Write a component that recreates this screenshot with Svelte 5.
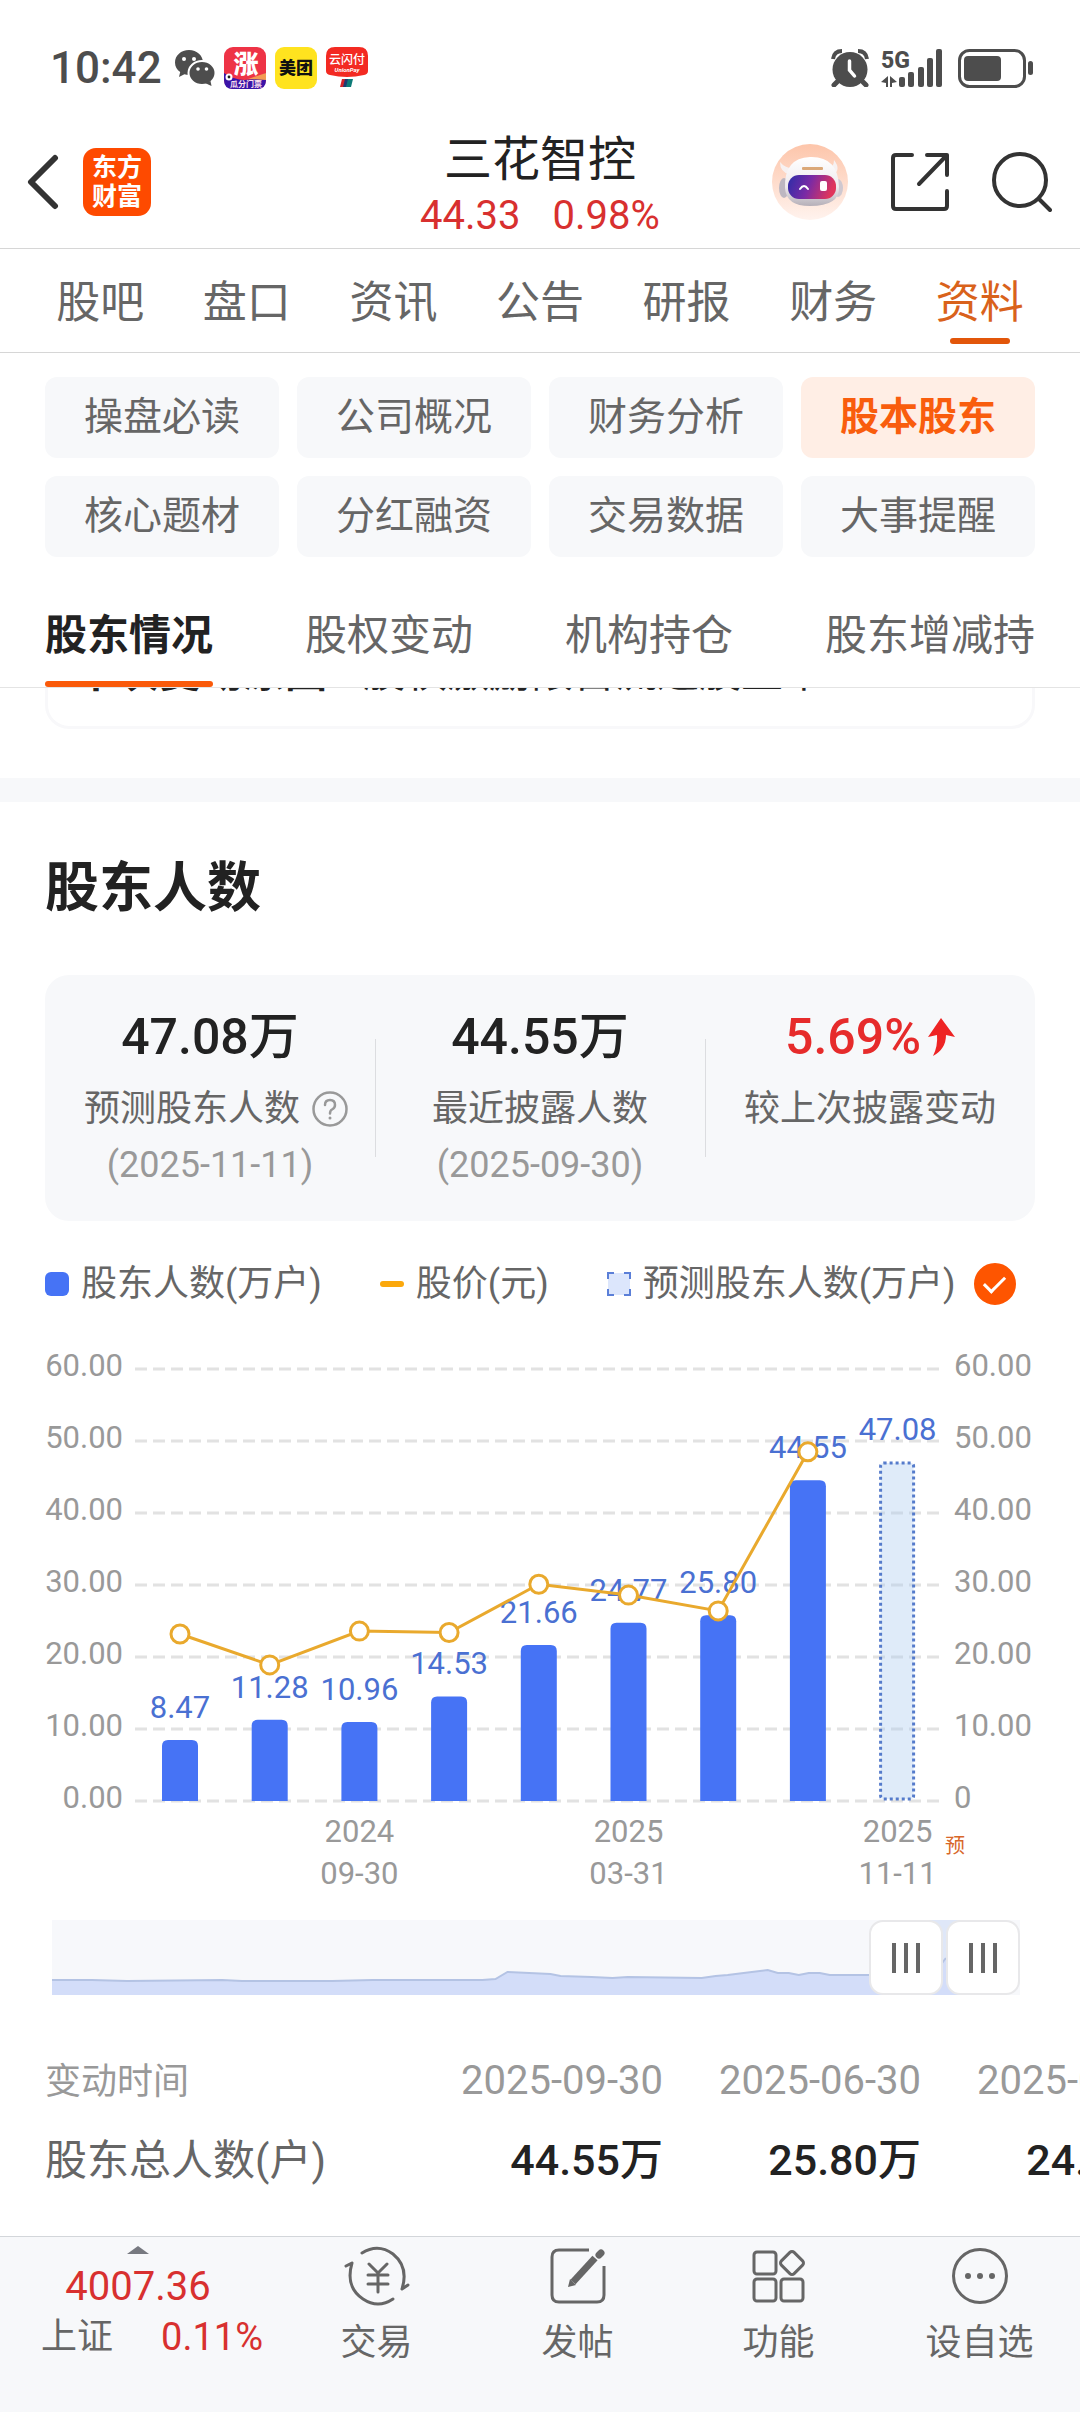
<script lang="ts">
  const tabs = ["股吧", "盘口", "资讯", "公告", "研报", "财务", "资料"];

  const topics = [
    "操盘必读",
    "公司概况",
    "财务分析",
    "股本股东",
    "核心题材",
    "分红融资",
    "交易数据",
    "大事提醒",
  ];

  const sections = ["股东情况", "股权变动", "机构持仓", "股东增减持"];

  type Quarter = {
    holders: number;
    price?: number;
    date?: [string, string];
    forecast?: boolean;
  };

  const quarters: Quarter[] = [
    { holders: 8.47, price: 23.2 },
    { holders: 11.28, price: 18.9 },
    { holders: 10.96, price: 23.6, date: ["2024", "09-30"] },
    { holders: 14.53, price: 23.4 },
    { holders: 21.66, price: 30.1 },
    { holders: 24.77, price: 28.6, date: ["2025", "03-31"] },
    { holders: 25.8, price: 26.4 },
    { holders: 44.55, price: 48.5 },
    { holders: 47.08, date: ["2025", "11-11"], forecast: true },
  ];

  const history = [
    { date: "2025-09-30", total: "44.55万" },
    { date: "2025-06-30", total: "25.80万" },
    { date: "2025-03-31", total: "24.77万" },
  ];

  const ticks = [60, 50, 40, 30, 20, 10, 0];

  // chart geometry, in viewBox units
  const base = 472;
  const barWidth = 36;
  const yOf = (value: number) => base - value * 7.2;
  const xOf = (index: number) => 180 + index * 89.7;

  const barPath = (index: number, value: number) => {
    const x = xOf(index) - barWidth / 2;
    const y = yOf(value);
    return `M${x} ${base}V${y + 6}q0-6 6-6h${barWidth - 12}q6 0 6 6V${base}z`;
  };

  const priceLine = quarters
    .map((q, i) => (q.price ? `${xOf(i)},${yOf(q.price)}` : ""))
    .join(" ")
    .trim();

  let activeTab = $state("资料");
  let activeTopic = $state("股本股东");
  let activeSection = $state("股东情况");
  let showForecast = $state(true);
  let from = $state(91.4);
  let to = $state(100);
</script>

<div class="page">
  <div class="status">
    <span class="clock">10:42</span>
    <svg class="wechat" width="41" height="38" viewBox="0 0 41 38" aria-hidden="true">
      <path fill="#4d4d4d" d="M15 1C7 1 1 6.500 1 13.500c0 4 2 7.500 5.200 9.600L5 28l5.400-2.800c1.500.4 3 .6 4.600.6 8 0 14-5.500 14-12.300S23 1 15 1z" />
      <ellipse cx="28" cy="24" rx="13.500" ry="12" fill="#4d4d4d" stroke="#fff" stroke-width="2" />
      <path fill="#4d4d4d" d="M31 34l6.500 3-1-5z" />
      <g fill="#fff">
        <circle cx="10" cy="10" r="2" /><circle cx="20" cy="10" r="2" />
        <circle cx="24" cy="20" r="1.800" /><circle cx="32.500" cy="20" r="1.800" />
      </g>
    </svg>
    <svg class="app" width="42" height="42" viewBox="0 0 42 42" aria-hidden="true">
      <rect width="42" height="42" rx="9" fill="#ee3346" />
      <path d="M0 26q20 14 42 0v7q0 9-9 9H9q-9 0-9-9z" fill="#3a14a8" />
      <path d="M24 32l18-6v7z" fill="#f39b54" />
      <text x="22" y="26" font-size="25" font-weight="900" fill="#fff" text-anchor="middle">涨</text>
      <circle cx="5" cy="30" r="3.500" fill="#fff" /><circle cx="5" cy="30" r="1.400" fill="#222" />
      <text x="22" y="40" font-size="8" font-weight="700" fill="#ffe3ee" text-anchor="middle">瓜分门票</text>
    </svg>
    <svg class="app" width="42" height="42" viewBox="0 0 42 42" aria-hidden="true">
      <rect width="42" height="42" rx="9" fill="#ffe31f" />
      <text x="21" y="27" font-size="17" font-weight="900" fill="#111" text-anchor="middle">美团</text>
    </svg>
    <svg class="app" width="42" height="42" viewBox="0 0 42 42" aria-hidden="true">
      <path d="M9 0h24q9 0 9 9v15q0 3-4 4-17 4-34 0-4-1-4-4V9q0-9 9-9z" fill="#f32a22" />
      <text x="21" y="17" font-size="12" font-weight="500" fill="#fff" text-anchor="middle">云闪付</text>
      <text x="21" y="25" font-size="6" font-style="italic" font-weight="700" fill="#fff" text-anchor="middle">UnionPay</text>
      <path d="M16 32h5l-2 8h-5z" fill="#d2232a" /><path d="M19 32h5l-2 8h-5z" fill="#1d3b72" /><path d="M22 32h5l-2 8h-5z" fill="#0d7b78" />
    </svg>
    <span class="fill"></span>
    <svg width="38" height="38" viewBox="0 0 38 38" fill="none" stroke="#4d4d4d" aria-hidden="true">
      <circle cx="19" cy="20.500" r="17.500" fill="#4d4d4d" stroke="none" />
      <path d="M2 10Q3 2 11 2M27 2q8 0 9 8" stroke-width="4" />
      <path d="M6 33l-3 3M32 33l3 3" stroke-width="5" stroke-linecap="round" />
      <path d="M18.500 12v9l5 6" stroke="#fff" stroke-width="3.500" stroke-linecap="round" />
    </svg>
    <svg class="signal" width="62" height="40" viewBox="0 0 62 40" fill="#4d4d4d" aria-hidden="true">
      <text x="0" y="20" font-size="23" font-weight="800">5G</text>
      <path d="M0 34l7-6v11H5v-4zM16 34l-7-6v11h2v-4z" />
      <rect x="18" y="29" width="6" height="10" rx="2" />
      <rect x="27" y="24" width="6" height="15" rx="2" />
      <rect x="37" y="19" width="6" height="20" rx="2" />
      <rect x="46" y="10" width="6" height="29" rx="2" />
      <rect x="55" y="1" width="6" height="38" rx="2" />
    </svg>
    <svg width="76" height="40" viewBox="0 0 76 40" aria-hidden="true">
      <rect x="1.500" y="2.500" width="65" height="36" rx="10" fill="none" stroke="#4d4d4d" stroke-width="3" />
      <rect x="6" y="8" width="37" height="25" rx="4" fill="#4d4d4d" />
      <rect x="70" y="13" width="5" height="14" rx="2.500" fill="#4d4d4d" />
    </svg>
  </div>

  <header>
    <div class="side">
      <button type="button" aria-label="返回">
        <svg width="32" height="56" viewBox="0 0 32 56" fill="none" stroke="#333" stroke-width="6" stroke-linecap="round" stroke-linejoin="round">
          <path d="M28 4L4 28l24 24" />
        </svg>
      </button>
      <a class="brand" href="#home"><span>东方</span><span>财富</span></a>
    </div>
    <div class="stock">
      <h1>三花智控</h1>
      <p><span>44.33</span><span>0.98%</span></p>
    </div>
    <div class="side tools">
      <button type="button" aria-label="智能助手">
        <svg width="76" height="76" viewBox="0 0 76 76">
          <defs>
            <linearGradient id="peach" x1="0" y1="0" x2="0" y2="1">
              <stop offset="0" stop-color="#fdc5aa" /><stop offset="1" stop-color="#fff3ee" />
            </linearGradient>
            <linearGradient id="visor" x1="0" y1="0" x2="1" y2="0.200">
              <stop offset="0" stop-color="#2c2da8" /><stop offset="0.500" stop-color="#7a2aa5" /><stop offset="1" stop-color="#e0355c" />
            </linearGradient>
            <linearGradient id="shell" x1="0" y1="0" x2="0" y2="1">
              <stop offset="0" stop-color="#fff" /><stop offset="0.600" stop-color="#efebee" /><stop offset="1" stop-color="#b5afb8" />
            </linearGradient>
          </defs>
          <circle cx="38" cy="38" r="38" fill="url(#peach)" />
          <path d="M17 30Q8 28 8 18q5 6 12 6zM57 24q5-1 5-8 8 10-2 16z" fill="#f7f1f1" />
          <ellipse cx="12" cy="44" rx="5" ry="10" fill="#bdb7c1" /><ellipse cx="66" cy="44" rx="5" ry="9" fill="#cfc8d0" />
          <path d="M13 44Q12 14 38 13q28-1 29 30 1 19-29 19-24 0-25-18z" fill="url(#shell)" />
          <rect x="30" y="23" width="21" height="3" rx="1" fill="#dba878" />
          <rect x="16" y="31" width="48" height="24" rx="11" fill="url(#visor)" />
          <path d="M28 45q4-6 8 0" fill="none" stroke="#fff" stroke-width="2" stroke-linecap="round" />
          <rect x="48" y="37" width="7" height="10" rx="2" fill="#fff" />
        </svg>
      </button>
      <button type="button" aria-label="分享">
        <svg width="60" height="60" viewBox="0 0 60 60" fill="none" stroke="#333" stroke-width="4" stroke-linecap="round" stroke-linejoin="round">
          <path d="M22 3H6q-3 0-3 3v48q0 3 3 3h48q3 0 3-3V39M37 3h20v20M57 3L29 32" />
        </svg>
      </button>
      <button type="button" aria-label="搜索">
        <svg width="60" height="62" viewBox="0 0 60 62" fill="none" stroke="#333" stroke-width="4" stroke-linecap="round">
          <circle cx="28" cy="29" r="26" /><path d="M47 48l11 11" />
        </svg>
      </button>
    </div>
  </header>

  <nav class="tabs">
    {#each tabs as tab}
      <button type="button" class:active={tab === activeTab} onclick={() => (activeTab = tab)}>{tab}</button>
    {/each}
  </nav>

  <div class="topics">
    {#each topics as topic}
      <button type="button" class:active={topic === activeTopic} onclick={() => (activeTopic = topic)}>{topic}</button>
    {/each}
  </div>

  <nav class="sections">
    {#each sections as section}
      <button type="button" class:active={section === activeSection} onclick={() => (activeSection = section)}>{section}</button>
    {/each}
  </nav>

  <div class="scrolled">
    <p class="notice"><strong>本次变动原因</strong><span>股权激励限售流通股上市</span></p>
  </div>

  <main>
    <h2>股东人数</h2>

    <div class="stats">
      <div class="stat">
        <strong>47.08万</strong>
        <span class="label hinted">
          预测股东人数
          <button type="button" aria-label="说明">
            <svg width="36" height="36" viewBox="0 0 36 36" fill="none" stroke="#999" stroke-width="2.500" stroke-linecap="round">
              <circle cx="18" cy="18" r="16.500" />
              <path d="M13 14q0-5 5-5t5 5q0 3-3 4.500-2 1-2 4" /><path d="M18 27v.1" stroke-width="3" />
            </svg>
          </button>
        </span>
        <span class="date">(2025-11-11)</span>
      </div>
      <div class="stat">
        <strong>44.55万</strong>
        <span class="label">最近披露人数</span>
        <span class="date">(2025-09-30)</span>
      </div>
      <div class="stat">
        <strong class="up">
          5.69%
          <svg width="28" height="38" viewBox="0 0 28 38" aria-hidden="true">
            <path d="M14 0l14 19-9-2q0 14-13 21 5-10 4-21l-9 2z" fill="#ee2424" />
          </svg>
        </strong>
        <span class="label">较上次披露变动</span>
      </div>
    </div>

    <div class="legend">
      <span class="key"><i class="bar"></i>股东人数(万户)</span>
      <span class="key"><i class="line"></i>股价(元)</span>
      <label class="key">
        <svg width="24" height="24" viewBox="0 0 24 24" aria-hidden="true">
          <rect x="1" y="1" width="22" height="22" fill="#dce6fc" />
          <path d="M1 7V1h6M17 1h6v6M23 17v6h-6M7 23H1v-6" fill="none" stroke="#5b7fd8" stroke-width="2" />
        </svg>
        预测股东人数(万户)
        <input type="checkbox" bind:checked={showForecast} />
      </label>
    </div>

    <svg class="chart" viewBox="0 0 1080 570" role="img" aria-label="股东人数与股价">
      {#each ticks as tick}
        <line x1="135" x2="939" y1={yOf(tick)} y2={yOf(tick)} class="rule" />
        <text x="123" y={yOf(tick) + 7} text-anchor="end" class="axis">{tick.toFixed(2)}</text>
        <text x="954" y={yOf(tick) + 7} class="axis">{tick ? tick.toFixed(2) : "0"}</text>
      {/each}

      {#each quarters as q, i}
        {#if !q.forecast}
          <path d={barPath(i, q.holders)} fill="#4673f5" />
        {:else if showForecast}
          <rect x={xOf(i) - 17} y={yOf(q.holders) + 1} width="33" height={base - yOf(q.holders) - 3} rx="3" class="forecast" />
        {/if}
        {#if !q.forecast || showForecast}
          <text x={xOf(i)} y={yOf(q.holders) - 22} text-anchor="middle" class="value">{q.holders.toFixed(2)}</text>
        {/if}
        {#if q.date}
          <text x={xOf(i)} y="513" text-anchor="middle" class="axis">{q.date[0]}</text>
          <text x={xOf(i)} y="555" text-anchor="middle" class="axis">{q.date[1]}</text>
        {/if}
      {/each}
      <text x="945" y="524" class="tag">预</text>

      <polyline points={priceLine} class="price" />
      {#each quarters as q, i}
        {#if q.price}
          <circle cx={xOf(i)} cy={yOf(q.price)} r="9" class="dot" />
        {/if}
      {/each}
    </svg>

    <div class="zoom">
      <svg viewBox="0 0 967 75" preserveAspectRatio="none" aria-hidden="true">
        <rect width="967" height="75" fill="#f7f8fb" />
        <rect x="853" width="77" height="75" fill="#dfe7f8" />
        <path
          d="M0 60H40L75 61 170 60 190 61H280L320 60H430L443 59 455 52 498 54 508 56 539 57 560 58 575 57 649 58 663 56 675 55 691 53 715 50 725 53 736 53 746 55 756 53H767L777 55H880L893 38 930 35V75H0z"
          fill="#d3ddf9"
        />
        <path
          d="M0 60H40L75 61 170 60 190 61H280L320 60H430L443 59 455 52 498 54 508 56 539 57 560 58 575 57 649 58 663 56 675 55 691 53 715 50 725 53 736 53 746 55 756 53H767L777 55H880L893 38"
          fill="none"
          stroke="#b4c3e4"
          stroke-width="2"
        />
      </svg>
      <input type="range" min="0" max="100" step="0.1" bind:value={from} aria-label="起始日期" />
      <input type="range" min="0" max="100" step="0.1" bind:value={to} aria-label="结束日期" />
    </div>

    <div class="history">
      <table>
        <thead>
          <tr>
            <th scope="col">变动时间</th>
            {#each history as row}
              <th scope="col">{row.date}</th>
            {/each}
          </tr>
        </thead>
        <tbody>
          <tr>
            <th scope="row">股东总人数(户)</th>
            {#each history as row}
              <td>{row.total}</td>
            {/each}
          </tr>
        </tbody>
      </table>
    </div>
  </main>

  <footer>
    <a class="index" href="#index">
      <svg width="22" height="8" viewBox="0 0 22 8" aria-hidden="true"><path d="M11 0l11 8H0z" fill="#777980" /></svg>
      <span class="points">4007.36</span>
      <span class="change"><span>上证</span><em>0.11%</em></span>
    </a>
    <button type="button">
      <svg width="66" height="60" viewBox="0 0 66 60" fill="none" stroke="#666" stroke-width="3" stroke-linecap="round" stroke-linejoin="round">
        <path d="M18 7Q34-3 49 8q16 13 9 35l6-4M49 53Q34 63 19 53 1 41 8 17l-6 3" />
        <path d="M25 18l9 9 9-9M34 27v19M24 29h20M24 38h20" />
      </svg>
      交易
    </button>
    <button type="button">
      <svg width="60" height="60" viewBox="0 0 60 60" fill="none" stroke="#666" stroke-width="3">
        <path d="M41 4H11q-7 0-7 7v38q0 7 7 7h38q7 0 7-7V20" />
        <path d="M47 12L25 36" stroke-width="7" />
        <path d="M28 39l-6-6-2 8z" fill="#666" stroke="none" />
        <path d="M51 9l2-2" stroke-width="7" stroke-linecap="round" />
      </svg>
      发帖
    </button>
    <button type="button">
      <svg width="60" height="60" viewBox="0 0 60 60" fill="none" stroke="#666" stroke-width="3">
        <rect x="5" y="6" width="22" height="22" rx="3" />
        <rect x="5" y="33" width="22" height="22" rx="3" />
        <rect x="32" y="33" width="22" height="22" rx="3" />
        <rect x="34" y="8" width="18" height="18" rx="3" transform="rotate(45 43 17)" />
      </svg>
      功能
    </button>
    <button type="button">
      <svg width="60" height="60" viewBox="0 0 60 60" fill="#666">
        <circle cx="30" cy="30" r="26.500" fill="none" stroke="#666" stroke-width="3" />
        <circle cx="18" cy="30" r="3" /><circle cx="30" cy="30" r="3" /><circle cx="42" cy="30" r="3" />
      </svg>
      设自选
    </button>
  </footer>
</div>

<style>
  :global(body) {
    background: #fff;
  }

  .page {
    display: flex;
    flex-direction: column;
    min-height: 100vh;
    overflow: hidden;
    color: #222;
    font-family: Roboto, "Noto Sans CJK SC", sans-serif;
  }

  .page :global(svg) {
    display: block;
    flex: none;
  }

  h1,
  h2,
  p {
    margin: 0;
  }

  button {
    padding: 0;
    border: 0;
    background: none;
    color: inherit;
    font: inherit;
    cursor: pointer;
  }

  a {
    color: inherit;
    text-decoration: none;
  }

  .status {
    display: flex;
    align-items: center;
    height: 48px;
    padding: 44px 46px 24px 50px;
    color: #4d4d4d;
  }

  .clock {
    font-size: 44px;
    font-weight: 500;
  }

  .wechat {
    margin-left: 12px;
  }

  .app {
    margin-left: 9px;
  }

  .fill {
    flex: 1;
  }

  .signal {
    margin: 0 15px 0 12px;
  }

  header {
    display: grid;
    grid-template-columns: 1fr auto 1fr;
    align-items: center;
    height: 132px;
    border-bottom: 1px solid #d6d6d6;
  }

  .side {
    display: flex;
    align-items: center;
    gap: 24px;
    padding-left: 27px;
  }

  .tools {
    justify-content: flex-end;
    gap: 42px;
    padding: 0 28px 0 0;
  }

  .brand {
    display: grid;
    place-content: center;
    width: 68px;
    height: 68px;
    border-radius: 13px;
    background: #fe4a00;
    color: #fff;
    font-size: 25px;
    font-weight: 700;
    line-height: 29px;
  }

  .stock {
    padding-top: 12px;
    text-align: center;
    line-height: 56px;
  }

  h1 {
    font-size: 48px;
    font-weight: 400;
  }

  .stock p {
    display: flex;
    justify-content: center;
    gap: 32px;
    color: #d8302f;
    font-size: 40px;
  }

  .tabs {
    display: grid;
    grid-template-columns: repeat(7, 1fr);
    height: 103px;
    padding: 0 27px;
    border-bottom: 1px solid #d6d6d6;
    color: #666;
    font-size: 44px;
  }

  .tabs button {
    position: relative;
    padding-bottom: 4px;
  }

  .tabs .active {
    color: #d9621b;
  }

  .tabs .active::after {
    content: "";
    position: absolute;
    bottom: 8px;
    left: 50%;
    width: 60px;
    height: 6px;
    margin-left: -30px;
    border-radius: 3px;
    background: #e2560a;
  }

  .topics {
    display: grid;
    grid-template-columns: repeat(4, 1fr);
    gap: 18px;
    padding: 24px 45px 0;
    color: #666;
    font-size: 39px;
  }

  .topics button {
    height: 81px;
    padding-bottom: 10px;
    border-radius: 12px;
    background: #f7f8fa;
  }

  .topics .active {
    background: #ffeee5;
    color: #f95d0d;
    font-weight: 700;
  }

  .sections {
    display: flex;
    justify-content: space-between;
    padding: 49px 45px 0;
    border-bottom: 1px solid #e4e4e4;
    color: #666;
    font-size: 42px;
    line-height: 60px;
  }

  .sections button {
    position: relative;
    padding-bottom: 21px;
  }

  .sections .active {
    color: #222;
    font-weight: 700;
  }

  .sections .active::after {
    content: "";
    position: absolute;
    inset: auto 0 0;
    height: 6px;
    border-radius: 3px;
    background: #fa5a0a;
  }

  /* the card is scrolled almost out of sight under the section bar */
  .scrolled {
    padding: 0 45px 49px;
    overflow: hidden;
    border-bottom: 24px solid #f7f8fa;
  }

  .notice {
    display: flex;
    gap: 36px;
    margin-top: -75px;
    padding: 36px 27px 32px;
    border: 3px solid #f8f8fa;
    border-radius: 24px;
    font-size: 42px;
    line-height: 42px;
  }

  main {
    flex: 1;
  }

  h2 {
    margin: 47px 45px 46px;
    font-size: 54px;
    line-height: 80px;
  }

  .stats {
    display: grid;
    grid-template-columns: repeat(3, 1fr);
    margin: 0 45px;
    padding: 32px 0 28px;
    border-radius: 24px;
    background: #f7f8fa;
  }

  .stat {
    position: relative;
    display: flex;
    flex-direction: column;
    align-items: center;
    font-size: 36px;
    line-height: 56px;
  }

  .stat + .stat::before {
    content: "";
    position: absolute;
    top: 32px;
    left: 0;
    width: 1px;
    height: 118px;
    background: #dcdde0;
  }

  .stat strong {
    margin-bottom: 14px;
    font-size: 50px;
    font-weight: 500;
    line-height: 60px;
  }

  .stat .up {
    display: flex;
    align-items: center;
    gap: 6px;
    color: #e62b2b;
  }

  .label {
    color: #666;
  }

  .hinted {
    display: flex;
    align-items: center;
    gap: 12px;
    padding-left: 12px;
  }

  .date {
    color: #999;
  }

  .legend {
    display: flex;
    align-items: center;
    gap: 58px;
    margin: 42px 45px 24px;
    color: #666;
    font-size: 36px;
    line-height: 42px;
    white-space: nowrap;
  }

  .key {
    display: flex;
    align-items: center;
    gap: 12px;
  }

  .key i {
    width: 24px;
    border-radius: 6px;
  }

  .key .bar {
    height: 24px;
    background: #4673f5;
  }

  .key .line {
    height: 6px;
    border-radius: 3px;
    background: #fba80c;
  }

  .key input {
    appearance: none;
    display: grid;
    place-items: center;
    width: 42px;
    height: 42px;
    margin: 0 0 0 6px;
    border: 2px solid #fe5500;
    border-radius: 50%;
  }

  .key input:checked {
    background: #fe5500;
  }

  .key input:checked::after {
    content: "";
    width: 18px;
    height: 9px;
    border: solid #fff;
    border-width: 0 0 3px 3px;
    transform: translateY(-2px) rotate(-45deg);
  }

  .chart {
    width: 100%;
  }

  .rule {
    stroke: #e2e2e2;
    stroke-width: 3;
    stroke-dasharray: 12 6;
  }

  .axis {
    fill: #999;
    font-size: 31px;
  }

  .value {
    fill: #4a70d2;
    font-size: 31px;
  }

  .tag {
    fill: #d8672a;
    font-size: 20px;
  }

  .forecast {
    fill: rgba(170, 202, 240, 0.38);
    stroke: #557bcb;
    stroke-width: 3;
    stroke-dasharray: 3 3;
  }

  .price {
    fill: none;
    stroke: #e9a92d;
    stroke-width: 3;
  }

  .dot {
    fill: #fff;
    stroke: #e9a92d;
    stroke-width: 3;
  }

  .zoom {
    position: relative;
    height: 75px;
    margin: 21px 60px 47px 52px;
  }

  .zoom svg {
    width: 100%;
    height: 75px;
  }

  .zoom input {
    appearance: none;
    position: absolute;
    inset: 0;
    width: 100%;
    height: 75px;
    margin: 0;
    background: none;
    pointer-events: none;
  }

  .zoom input::-webkit-slider-thumb {
    appearance: none;
    box-sizing: border-box;
    width: 74px;
    height: 75px;
    border: 2px solid #e8e8ea;
    border-radius: 14px;
    background:
      linear-gradient(#666, #666) 21px center / 4px 30px no-repeat,
      linear-gradient(#666, #666) 33px center / 4px 30px no-repeat,
      linear-gradient(#666, #666) 45px center / 4px 30px no-repeat,
      #fff;
    pointer-events: auto;
  }

  .history {
    margin-left: 45px;
    overflow: hidden;
  }

  table {
    width: 1134px;
    table-layout: fixed;
    border-collapse: collapse;
  }

  th,
  td {
    width: 258px;
    padding: 0;
    font-size: 43px;
    font-weight: 500;
    line-height: 78px;
    text-align: right;
    vertical-align: baseline;
    white-space: nowrap;
  }

  thead th {
    color: #999;
    font-size: 40px;
    font-weight: 400;
  }

  tr th:first-child {
    width: 360px;
    text-align: left;
  }

  thead th:first-child {
    font-size: 36px;
  }

  tbody th {
    color: #666;
    font-size: 42px;
    font-weight: 400;
  }

  footer {
    display: grid;
    grid-template-columns: 276fr repeat(4, 201fr);
    height: 175px;
    border-top: 1px solid #d3d6da;
    background: #f7f8fa;
    color: #666;
    font-size: 36px;
    line-height: 50px;
  }

  footer button,
  .index {
    display: flex;
    flex-direction: column;
    align-items: center;
    padding-top: 9px;
  }

  footer button {
    gap: 12px;
  }

  .points,
  .change em {
    color: #d8302f;
  }

  .points {
    margin-top: 8px;
    font-size: 40px;
  }

  .change {
    display: flex;
    gap: 48px;
    padding-left: 28px;
  }

  .change em {
    font-size: 38px;
    font-style: normal;
  }
</style>
